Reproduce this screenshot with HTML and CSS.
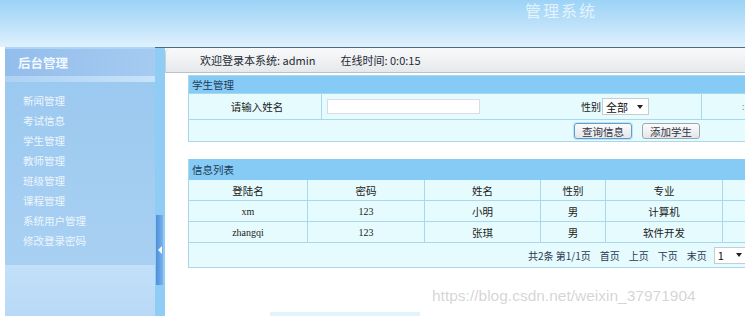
FILE: index.html
```
<!DOCTYPE html>
<html lang="zh-CN">
<head>
    <meta charset="UTF-8">
    <title>管理系统</title>
    <link rel="stylesheet" href="styles.css">
</head>
<body>
    <div class="page">
        <header class="top">
            <span class="sys-title">管理系统</span>
        </header>

        <div class="frame">
            <aside class="sidebar">
                <div class="side-head">后台管理</div>
                <div class="side-strip"></div>
                <ul class="menu">
                    <li>新闻管理</li>
                    <li>考试信息</li>
                    <li>学生管理</li>
                    <li>教师管理</li>
                    <li>班级管理</li>
                    <li>课程管理</li>
                    <li>系统用户管理</li>
                    <li>修改登录密码</li>
                </ul>
            </aside>

            <div class="splitter">
                <div class="toggle"><span class="arrow"></span></div>
            </div>

            <main class="main">
                <div class="welcome">
                    <span>欢迎登录本系统: admin</span>
                    <span class="online">在线时间: 0:0:15</span>
                </div>

                <div class="content">
                    <section class="panel search-panel">
                        <div class="panel-title">学生管理</div>
                        <div class="row row-search">
                            <div class="cell cell-label">请输入姓名</div>
                            <div class="cell cell-input">
                                <input type="text" class="name-input">
                                <span class="sex-label">性别</span>
                                <div class="select">全部 <span class="caret"></span></div>
                            </div>
                            <div class="cell cell-extra">:</div>
                        </div>
                        <div class="row row-buttons">
                            <button class="btn btn-active">查询信息</button>
                            <button class="btn">添加学生</button>
                        </div>
                    </section>

                    <section class="panel list-panel">
                        <div class="panel-title list-title">信息列表</div>
                        <table class="grid">
                            <tr class="head">
                                <td class="c1">登陆名</td>
                                <td class="c2">密码</td>
                                <td class="c3">姓名</td>
                                <td class="c4">性别</td>
                                <td class="c5">专业</td>
                                <td class="c6"></td>
                            </tr>
                            <tr>
                                <td class="latin">xm</td>
                                <td class="latin">123</td>
                                <td>小明</td>
                                <td>男</td>
                                <td>计算机</td>
                                <td></td>
                            </tr>
                            <tr>
                                <td class="latin">zhangqi</td>
                                <td class="latin">123</td>
                                <td>张琪</td>
                                <td>男</td>
                                <td>软件开发</td>
                                <td></td>
                            </tr>
                            <tr class="pager-row">
                                <td colspan="6">
                                    <div class="pager">
                                        <span>共2条 第1/1页</span>
                                        <span>首页</span>
                                        <span>上页</span>
                                        <span>下页</span>
                                        <span>末页</span>
                                        <div class="select page-select">1 <span class="caret"></span></div>
                                    </div>
                                </td>
                            </tr>
                        </table>
                    </section>
                    <div class="bottom-strip"></div>
                </div>
            </main>
        </div>

        <div class="watermark">https://blog.csdn.net/weixin_37971904</div>
    </div>
</body>
</html>
```

FILE: styles.css
```
body {
    margin: 0;
    background-color: #ffffff;
    font-family: "Noto Sans CJK SC", "Noto Sans", sans-serif;
    overflow: hidden;
}

.page {
    width: 745px;
    height: 316px;
    position: relative;
    overflow: hidden;
    display: flex;
    flex-direction: column;
}

.top {
    height: 47px;
    flex-shrink: 0;
    background: linear-gradient(#9bd3f6, #bfe2fa 55%, #e0f1fd);
    position: relative;
}

.sys-title {
    display: block;
    padding: 1px 0 0 525px;
    font-size: 16px;
    line-height: 18px;
    letter-spacing: 2px;
    color: rgba(255, 255, 255, 0.7);
}

.frame {
    flex: 1;
    display: flex;
    border-top: 1px solid #4f6b7f;
    margin-left: 116px;
}

.sidebar {
    width: 150px;
    margin-left: -111px;
    margin-top: -1px;
    background: linear-gradient(to right, #98c7ef, #b2d8f5);
    display: flex;
    flex-direction: column;
}

.side-head {
    height: 29px;
    line-height: 27px;
    padding-left: 13px;
    font-size: 12.5px;
    font-weight: bold;
    color: #f2f8ff;
    background: linear-gradient(to right, #93bdeb, #a5cbf1);
    border-top: 2px solid #aed5f5;
    box-sizing: border-box;
}

.side-strip {
    height: 6px;
    background: linear-gradient(to right, #aed1f3, #c8e3f9);
}

.menu {
    list-style: none;
    margin: 0;
    padding: 9px 0 0 18px;
    flex: 1;
    background: linear-gradient(#9cc9f0 0%, #a8d0f2 78%, #c2e0f9 78%, #b8d9f6 100%);
}

.menu li {
    height: 20px;
    line-height: 20px;
    font-size: 10.5px;
    color: #eef6fe;
}

.splitter {
    width: 10px;
    background-color: #8fcdf5;
    padding-top: 167px;
    box-sizing: border-box;
}

.toggle {
    width: 7px;
    height: 70px;
    margin-left: 1px;
    background: linear-gradient(to right, #4d8fdb, #7ab2ec);
    display: flex;
    align-items: center;
    justify-content: center;
}

.arrow {
    width: 0;
    height: 0;
    border-top: 4px solid transparent;
    border-bottom: 4px solid transparent;
    border-right: 4px solid #ffffff;
}

.main {
    flex: 1;
    background-color: #ffffff;
    overflow: hidden;
}

.welcome {
    height: 25px;
    box-sizing: border-box;
    padding-left: 34px;
    display: flex;
    align-items: center;
    gap: 25px;
    font-size: 11px;
    color: #1e2a33;
    background: linear-gradient(#f8f9fa, #e6e9ec);
    border-bottom: 1px solid #b8c2ca;
    border-left: 1px solid #c9d1d7;
    border-top-left-radius: 5px;
}

.content {
    padding: 2px 0 0 23px;
}

.panel {
    width: 600px;
    border: 1px solid #a9d8ee;
    background-color: #e5fbfd;
}

.panel-title {
    height: 17px;
    line-height: 17px;
    padding-left: 3px;
    font-size: 10.5px;
    color: #1d3d55;
    background-color: #86cbf5;
}

.row {
    display: flex;
    border-top: 1px solid #a9d8ee;
}

.row-search {
    height: 25px;
}

.cell {
    display: flex;
    align-items: center;
    font-size: 10.5px;
    color: #222;
}

.cell-label {
    width: 133px;
    justify-content: center;
    padding-left: 4px;
    box-sizing: border-box;
    border-right: 1px solid #a9d8ee;
}

.cell-input {
    width: 374px;
    padding-left: 5px;
    border-right: 1px solid #a9d8ee;
}

.name-input {
    width: 153px;
    height: 15px;
    box-sizing: border-box;
    border: 1px solid #d7dde2;
    background-color: #ffffff;
    margin: 0;
    padding: 0;
}

.sex-label {
    margin-left: 101px;
    font-size: 10px;
}

.select {
    display: inline-flex;
    align-items: center;
    justify-content: space-between;
    width: 47px;
    height: 17px;
    box-sizing: border-box;
    margin-left: 1px;
    padding: 0 5px 0 3px;
    border: 1px solid #c6ccd2;
    background-color: #ffffff;
    font-size: 11px;
    color: #111;
}

.caret {
    width: 0;
    height: 0;
    border-left: 3px solid transparent;
    border-right: 3px solid transparent;
    border-top: 4px solid #222;
}

.cell-extra {
    padding-left: 40px;
    font-size: 9px;
    color: #888;
}

.row-buttons {
    height: 21px;
    align-items: center;
    padding-left: 385px;
    gap: 10px;
}

.btn {
    height: 16px;
    width: 58px;
    padding: 0;
    font-family: inherit;
    font-size: 10.5px;
    color: #334;
    border: 1px solid #9ea6ad;
    border-radius: 3px;
    background: linear-gradient(#fbfbfb, #e3e6e9);
}

.btn-active {
    border-color: #5f9fc9;
    box-shadow: 0 0 0 1px #bfe2f5;
}

.list-panel {
    margin-top: 17px;
    border-top: none;
}

.list-title {
    height: 21px;
    line-height: 21px;
}

.grid {
    border-collapse: collapse;
    width: 100%;
    table-layout: fixed;
}

.grid td {
    height: 20px;
    padding: 0;
    border: 1px solid #a9d8ee;
    text-align: center;
    font-size: 10.5px;
    color: #222;
}

.grid tr:first-child td {
    border-top: none;
}

.grid td:first-child {
    border-left: none;
}

.grid .latin {
    font-family: "Liberation Serif", serif;
    font-size: 10px;
}

.c1 { width: 118px; }
.c2 { width: 116px; }
.c3 { width: 115px; }
.c4 { width: 64px; }
.c5 { width: 116px; }

.pager-row td {
    height: 24px;
    border-bottom: none;
}

.pager {
    display: flex;
    align-items: center;
    padding-left: 339px;
    gap: 9px;
    font-size: 10px;
    color: #2b3a55;
}

.page-select {
    width: 34px;
    margin-left: -2px;
}

.bottom-strip {
    width: 150px;
    height: 4px;
    margin: 44px 0 0 82px;
    background-color: #e3f3fc;
}

.watermark {
    position: absolute;
    left: 432px;
    top: 287px;
    font-family: "Liberation Sans", Arial, sans-serif;
    font-size: 15.5px;
    color: rgba(160, 160, 160, 0.45);
    pointer-events: none;
}
```
